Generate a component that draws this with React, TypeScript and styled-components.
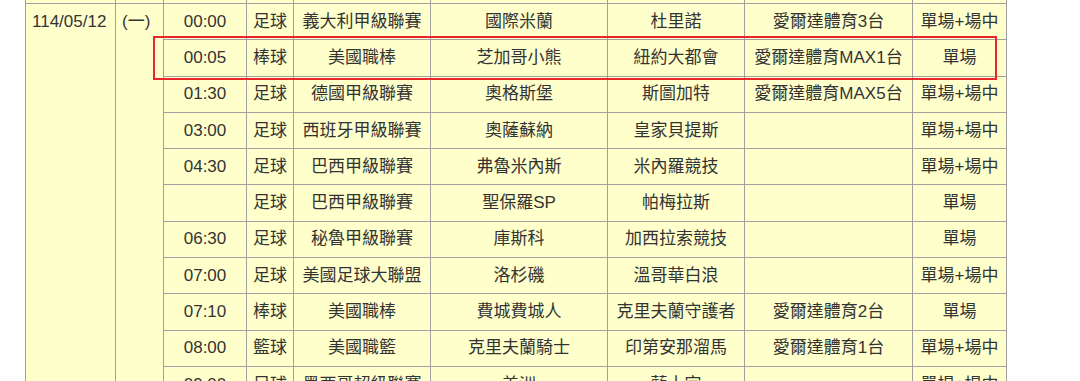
import React from 'react'
import styled, { createGlobalStyle } from 'styled-components'

const GlobalStyle = createGlobalStyle`
  html, body {
    margin: 0;
    padding: 0;
    background: #ffffff;
  }
  body {
    font-family: 'Liberation Sans', 'Noto Sans CJK TC', sans-serif;
    overflow: hidden;
  }
`

type Match = {
  time: string
  sport: string
  league: string
  home: string
  away: string
  channel: string
  kind: string
}

const matches: Match[] = [
  { time: '00:00', sport: '足球', league: '義大利甲級聯賽', home: '國際米蘭', away: '杜里諾', channel: '愛爾達體育3台', kind: '單場+場中' },
  { time: '00:05', sport: '棒球', league: '美國職棒', home: '芝加哥小熊', away: '紐約大都會', channel: '愛爾達體育MAX1台', kind: '單場' },
  { time: '01:30', sport: '足球', league: '德國甲級聯賽', home: '奧格斯堡', away: '斯圖加特', channel: '愛爾達體育MAX5台', kind: '單場+場中' },
  { time: '03:00', sport: '足球', league: '西班牙甲級聯賽', home: '奧薩蘇納', away: '皇家貝提斯', channel: '', kind: '單場+場中' },
  { time: '04:30', sport: '足球', league: '巴西甲級聯賽', home: '弗魯米內斯', away: '米內羅競技', channel: '', kind: '單場+場中' },
  { time: '', sport: '足球', league: '巴西甲級聯賽', home: '聖保羅SP', away: '帕梅拉斯', channel: '', kind: '單場' },
  { time: '06:30', sport: '足球', league: '秘魯甲級聯賽', home: '庫斯科', away: '加西拉索競技', channel: '', kind: '單場' },
  { time: '07:00', sport: '足球', league: '美國足球大聯盟', home: '洛杉磯', away: '溫哥華白浪', channel: '', kind: '單場+場中' },
  { time: '07:10', sport: '棒球', league: '美國職棒', home: '費城費城人', away: '克里夫蘭守護者', channel: '愛爾達體育2台', kind: '單場' },
  { time: '08:00', sport: '籃球', league: '美國職籃', home: '克里夫蘭騎士', away: '印第安那溜馬', channel: '愛爾達體育1台', kind: '單場+場中' },
  { time: '09:00', sport: '足球', league: '墨西哥超級聯賽', home: '美洲', away: '藍十字', channel: '', kind: '單場+場中' },
]

const colWidths = [90, 48, 83, 47, 137, 177, 137, 168, 94]

const Page = styled.div`
  position: relative;
  width: 1080px;
  height: 381px;
  overflow: hidden;
  padding-left: 25px;
  box-sizing: border-box;
`

const Schedule = styled.table`
  border-collapse: collapse;
  table-layout: fixed;
  width: 982px;
  margin-top: -33.3px;
  background: #ffffcc;
  color: #333333;
  font-size: 17px;
  border-left: 1px solid #777777;
`

const Row = styled.tr`
  height: 36.3px;
`

const Cell = styled.td<{ $align?: 'left' | 'center'; $top?: boolean }>`
  border: 1px solid #a0a0a0;
  padding: 0 4px;
  height: 34.3px;
  line-height: 20px;
  white-space: nowrap;
  text-align: ${(p) => p.$align || 'center'};
  vertical-align: ${(p) => (p.$top ? 'top' : 'middle')};
  padding-top: ${(p) => (p.$top ? '8px' : '0')};
  padding-left: ${(p) => (p.$align === 'left' ? '6px' : '4px')};
`

const Highlight = styled.div`
  position: absolute;
  left: 153px;
  top: 36px;
  width: 844px;
  height: 44px;
  border: 2px solid #e8262b;
  box-sizing: border-box;
  pointer-events: none;
`

export default function App() {
  return (
    <>
      <GlobalStyle />
      <Page>
        <Schedule>
          <colgroup>
            {colWidths.map((w, i) => (
              <col key={i} style={{ width: w }} />
            ))}
          </colgroup>
          <tbody>
            <Row>
              {colWidths.map((_, i) => (
                <Cell key={i} />
              ))}
            </Row>
            {matches.map((m, i) => (
              <Row key={i}>
                {i === 0 ? (
                  <>
                    <Cell $align={'left'} $top rowSpan={matches.length}>
                      114/05/12
                    </Cell>
                    <Cell $align={'left'} $top rowSpan={matches.length}>
                      (一)
                    </Cell>
                  </>
                ) : null}
                <Cell>{m.time}</Cell>
                <Cell>{m.sport}</Cell>
                <Cell>{m.league}</Cell>
                <Cell>{m.home}</Cell>
                <Cell>{m.away}</Cell>
                <Cell>{m.channel}</Cell>
                <Cell>{m.kind}</Cell>
              </Row>
            ))}
          </tbody>
        </Schedule>
        <Highlight />
      </Page>
    </>
  )
}
